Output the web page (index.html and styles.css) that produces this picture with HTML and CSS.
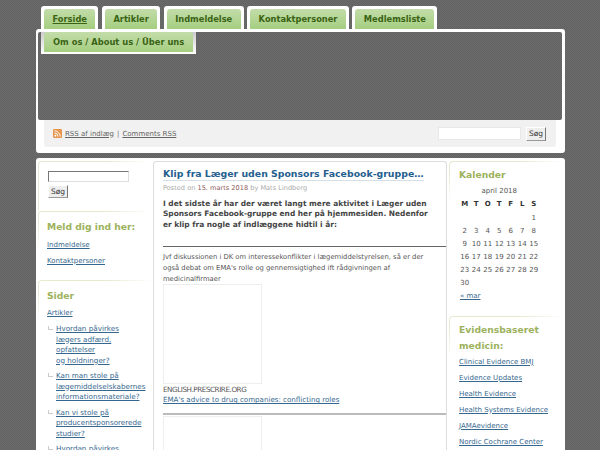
FILE: index.html
```html
<!doctype html>
<html>
<head>
<meta charset="UTF-8">
<title>Læger uden Sponsors</title>
<link rel="stylesheet" href="styles.css">
</head>
<body>
<div class="page">
	<ul class="tabs">
		<li class="tab"><a href="#" class="current">Forside</a></li>
		<li class="tab"><a href="#">Artikler</a></li>
		<li class="tab"><a href="#">Indmeldelse</a></li>
		<li class="tab"><a href="#">Kontaktpersoner</a></li>
		<li class="tab"><a href="#">Medlemsliste</a></li>
		<li class="tab"><a href="#">Om os / About us / Über uns</a></li>
	</ul>
	<div class="header">
		<div class="banner"></div>
		<div class="subbar">
			<div class="feeds">
				<svg class="rss" width="9" height="9" viewBox="0 0 10 10"><rect width="10" height="10" rx="1.5" fill="#e8944a"/><circle cx="2.6" cy="7.4" r="1.1" fill="#fff"/><path d="M1.6 4.4a4 4 0 0 1 4 4M1.6 2a6.4 6.4 0 0 1 6.4 6.4" fill="none" stroke="#fff" stroke-width="1.1"/></svg>
				<a href="#">RSS af indlæg</a> <span class="sep">|</span> <a href="#">Comments RSS</a>
			</div>
			<form class="topsearch">
				<input type="text" class="topinput">
				<button type="button" class="btn">Søg</button>
			</form>
		</div>
	</div>
	<div class="main">
		<div class="left">
			<form class="sidesearch">
				<input type="text" class="sideinput">
				<button type="button" class="btn">Søg</button>
			</form>
			<div class="widget">
				<h3>Meld dig ind her:</h3>
				<p><a href="#">Indmeldelse</a></p>
				<p><a href="#">Kontaktpersoner</a></p>
			</div>
			<div class="widget">
				<h3>Sider</h3>
				<p><a href="#">Artikler</a></p>
				<ul class="subpages">
					<li><a href="#">Hvordan påvirkes<br>lægers adfærd,<br>opfattelser<br>og holdninger?</a></li>
					<li><a href="#">Kan man stole på lægemiddelselskabernes informationsmateriale?</a></li>
					<li><a href="#">Kan vi stole på producentsponsorerede studier?</a></li>
					<li><a href="#">Hvordan påvirkes</a></li>
				</ul>
			</div>
		</div>
		<div class="post">
			<h2><a href="#">Klip fra Læger uden Sponsors Facebook-gruppe…</a></h2>
			<div class="meta">Posted on <span class="date">15. marts 2018</span> by Mats Lindberg</div>
			<p class="lead">I det sidste år har der været langt mere aktivitet i Læger uden Sponsors Facebook-gruppe end her på hjemmesiden. Nedenfor er klip fra nogle af indlæggene hidtil i år:</p>
			<hr class="rule">
			<p class="body">Jvf diskussionen i DK om interessekonflikter i lægemiddelstyrelsen, så er der også debat om EMA's rolle og gennemsigtighed ift rådgivningen af medicinalfirmaer</p>
			<div class="thumb"></div>
			<div class="source">ENGLISH.PRESCRIRE.ORG</div>
			<a href="#" class="body article-link">EMA's advice to drug companies: conflicting roles</a>
			<hr class="rule light">
			<div class="thumb"></div>
		</div>
		<div class="right">
			<div class="widget">
				<h3>Kalender</h3>
				<table class="cal">
					<caption>april 2018</caption>
					<tr><th>M</th><th>T</th><th>O</th><th>T</th><th>F</th><th>L</th><th>S</th></tr>
					<tr><td colspan="6"></td><td>1</td></tr>
					<tr><td>2</td><td>3</td><td>4</td><td>5</td><td>6</td><td>7</td><td>8</td></tr>
					<tr><td>9</td><td>10</td><td>11</td><td>12</td><td>13</td><td>14</td><td>15</td></tr>
					<tr><td>16</td><td>17</td><td>18</td><td>19</td><td>20</td><td>21</td><td>22</td></tr>
					<tr><td>23</td><td>24</td><td>25</td><td>26</td><td>27</td><td>28</td><td>29</td></tr>
					<tr><td>30</td></tr>
				</table>
				<p class="prev"><a href="#">« mar</a></p>
			</div>
			<div class="widget">
				<h3>Evidensbaseret medicin:</h3>
				<p><a href="#">Clinical Evidence BMJ</a></p>
				<p><a href="#">Evidence Updates</a></p>
				<p><a href="#">Health Evidence</a></p>
				<p><a href="#">Health Systems Evidence</a></p>
				<p><a href="#">JAMAevidence</a></p>
				<p><a href="#">Nordic Cochrane Center</a></p>
			</div>
		</div>
	</div>
</div>
</body>
</html>
```

FILE: styles.css
```css
html, body {
	margin: 0;
	height: 450px;
	overflow: hidden;
}

body {
	font-family: "DejaVu Sans", sans-serif;
	font-size: 7px;
	color: #555;
	background: conic-gradient(#6c6c6c 25%, #626262 0 50%, #6c6c6c 0 75%, #626262 0) 0 0 / 2px 2px;
}

a {
	color: #36688f;
}

.page {
	width: 529px;
	margin-left: 36px;
	padding-top: 6px;
}

.tabs {
	display: flex;
	flex-wrap: wrap;
	gap: 0 3.4px;
	list-style: none;
	margin: 0;
	padding: 0 0 0 5px;
	height: 23px;
	position: relative;
	z-index: 1;
}

.tab {
	height: 23px;
	box-sizing: border-box;
	padding: 3px 3px 0;
	background: #fff;
	border-radius: 3px 3px 0 0;
}

.tab:last-child {
	height: 22px;
	padding-top: 0;
	padding-bottom: 1px;
	margin-top: 3px;
	background: linear-gradient(#ccc, #fff);
	border-radius: 0;
}

.tab a {
	display: block;
	height: 20px;
	padding: 0 8.5px;
	line-height: 20px;
	font-size: 8.3px;
	font-weight: bold;
	color: #3a6314;
	text-decoration: none;
	background: linear-gradient(#c3dcaa, #a5cf80);
	border-radius: 3px 3px 0 0;
}

.tab:last-child a {
	padding: 0 9px;
	font-size: 8.35px;
}

.tab a.current {
	text-decoration: underline;
}

.header {
	background: #fff;
	border-radius: 3px;
	padding: 3px;
	height: 118px;
}

.banner {
	height: 88px;
	margin: 0 0 0 -1px;
	background: conic-gradient(#6c6c6c 25%, #626262 0 50%, #6c6c6c 0 75%, #626262 0) 0 0 / 2px 2px;
	border-radius: 2px;
}

.subbar {
	display: flex;
	justify-content: space-between;
	align-items: center;
	height: 27px;
	margin: 0 6px 0 5px;
	padding: 0 10px 0 9px;
	background: #f1f1f1;
	border-radius: 0 0 3px 3px;
}

.feeds {
	display: flex;
	align-items: center;
	gap: 3px;
	color: #777;
}

.feeds a {
	color: #666;
}

.topsearch {
	display: flex;
	align-items: center;
	gap: 5px;
	margin: 0;
}

.topinput {
	width: 83px;
	height: 13px;
	padding: 0;
	border: 0;
	outline: 1px solid #e8e8e8;
	outline-offset: -1px;
	background: #fff;
}

.btn {
	height: 14px;
	padding: 0 2px;
	font-family: "DejaVu Sans", sans-serif;
	font-size: 7.5px;
	color: #333;
	background: #eee;
	border: 1px solid;
	border-color: #fff #777 #999 #fff;
}

.main {
	display: grid;
	grid-template-columns: 113px 294px 116px;
	gap: 0 2px;
	margin-top: 5px;
	padding: 3px 0 0 2px;
	background: #fff;
	border-radius: 3px 3px 0 0;
	height: 290px;
	overflow: hidden;
}

.left,
.right {
	min-width: 0;
}

.sidesearch {
	position: relative;
	display: flex;
	flex-direction: column;
	align-items: flex-start;
	gap: 3px;
	padding: 9px 0 13px 9px;
	margin: 0;
	border: 1px solid #e4ebcf;
	border-right: 0;
	border-bottom: 0;
	border-radius: 4px 0 0 0;
}

.sidesearch .btn {
	height: 13px;
}

.sideinput {
	width: 79px;
	height: 9px;
	padding: 0;
	background: #fff;
	border: 1px solid;
	border-color: #777 #ddd #ddd #777;
}

.widget {
	position: relative;
	padding: 7px 0 0 8px;
	border: 1px solid #e4ebcf;
	border-right: 0;
	border-bottom: 0;
	border-radius: 4px 0 0 0;
}

/* the green edge fades out to the right and downwards */
.widget::after,
.sidesearch::after {
	content: "";
	position: absolute;
	top: -1px;
	right: 0;
	width: 45px;
	height: 3px;
	background: linear-gradient(90deg, rgba(255,255,255,0), #fff);
}

.widget::before {
	content: "";
	position: absolute;
	top: 10px;
	left: -1px;
	bottom: 0;
	width: 1px;
	background: linear-gradient(rgba(255,255,255,0), #fff 30px);
}

.left .widget {
	margin-bottom: 14px;
}

.widget h3 {
	margin: 0 0 4.5px;
	font-size: 9.2px;
	line-height: 16px;
	font-weight: bold;
	color: #9db25d;
}

.widget p {
	margin: 0 0 6px;
	line-height: 10px;
}

.subpages {
	list-style: none;
	margin: 0;
	padding: 0;
	font-size: 7.2px;
}

.subpages li {
	position: relative;
	margin-bottom: 5px;
	padding-left: 9px;
	line-height: 10.5px;
}

.subpages li::before {
	content: "";
	position: absolute;
	left: 1px;
	top: 2px;
	width: 4px;
	height: 3px;
	border-left: 1px solid #ccc;
	border-bottom: 1px solid #ccc;
}

.post {
	min-width: 0;
	padding: 5px 0 0 9px;
	border: 1px solid #ddd;
	border-bottom: 0;
	border-radius: 3px 3px 0 0;
}

.post h2 {
	display: inline-block;
	margin: 0 0 2px;
	font-size: 9.35px;
	line-height: 13px;
	white-space: nowrap;
	border-bottom: 1px solid #d6dfe6;
	vertical-align: top;
}

.post h2 a {
	color: #24608f;
	text-decoration: none;
}

.meta {
	font-size: 6.6px;
	line-height: 10px;
	color: #aaa;
}

.date {
	color: #8f5a5a;
}

.lead {
	margin: 5.5px 0 15px;
	padding-right: 10px;
	font-size: 7.45px;
	font-weight: bold;
	line-height: 10.7px;
	color: #444;
}

.rule {
	height: 1px;
	margin: 0 0 5.5px;
	border: 0;
	background: #666;
}

.rule.light {
	height: 2px;
	margin: 7px 0 1px;
	background: #bbb;
}

.body {
	display: block;
	margin: 0;
	font-size: 6.8px;
	line-height: 10.7px;
	padding-right: 10px;
}

.article-link {
	font-size: 7.1px;
}

.thumb {
	width: 97px;
	height: 98px;
	border: 1px solid #eee;
}

.source {
	margin-top: 1px;
	font-size: 7.2px;
	line-height: 10px;
	letter-spacing: -0.43px;
}

.right .widget {
	padding-top: 5px;
	padding-left: 9px;
}

.right .widget h3 {
	margin-bottom: 3px;
}

.cal {
	border-collapse: collapse;
	margin-top: -1px;
	font-size: 7px;
	color: #555;
}

.cal caption {
	line-height: 12px;
}

.cal th,
.cal td {
	width: 11.5px;
	height: 13px;
	padding: 0;
	text-align: center;
}

.cal th {
	height: 14px;
	color: #333;
}

.widget .prev {
	margin: 1.5px 0 15px 1px;
}
```
